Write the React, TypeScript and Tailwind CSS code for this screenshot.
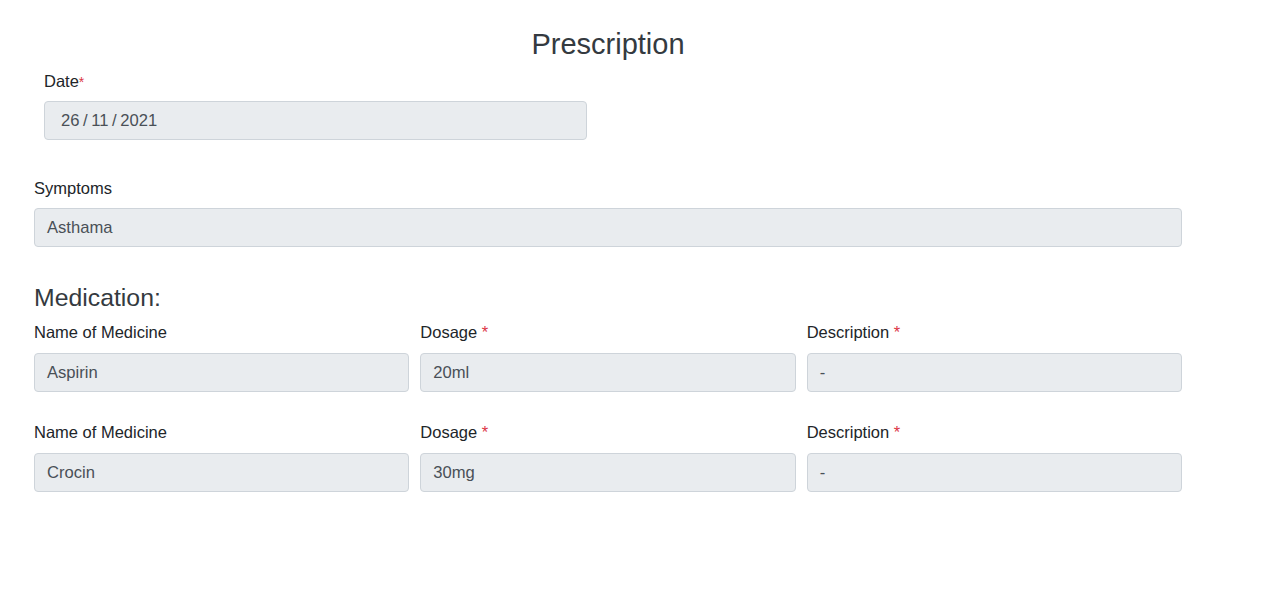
import React from "react";

const inputCls =
  "h-[39px] w-full rounded-[4px] border border-[#ced4da] bg-[#e9ecef] px-[12px] text-[16.6px] leading-[24px] text-[#495057] flex items-center";

function Field({
  label,
  value,
  required,
  mb,
}: {
  label: string;
  value: string;
  required?: boolean;
  mb: string;
}) {
  return (
    <div className="flex flex-col">
      <label className={"text-[16.5px] leading-[22px] text-[#212529] " + mb}>
        {label}
        {required && <span className="text-[#dc3545]"> *</span>}
      </label>
      <div className={inputCls}>{value}</div>
    </div>
  );
}

export default function App() {
  const rows = [
    { name: "Aspirin", dosage: "20ml", desc: "-" },
    { name: "Crocin", dosage: "30mg", desc: "-" },
  ];
  return (
    <div
      className="min-h-[608px] w-[1280px] bg-white"
      style={{ fontFamily: '"Liberation Sans", Arial, sans-serif' }}
    >
      <div className="ml-[34px] w-[1148px] pt-[26px]">
        <h3 className="pt-[1px] text-center text-[29px] leading-[34px] text-[#343a40]">Prescription</h3>
        <div className="ml-[10px] mt-[8px] w-[543px] flex flex-col">
          <label className="text-[16.5px] leading-[24px] text-[#212529] mb-[7px]">
            Date<span className="text-[#dc3545] text-[14px]">*</span>
          </label>
          <div className={inputCls + " pl-[16px] [word-spacing:-1px]"}>26 / 11 / 2021</div>
        </div>
        <div className="mt-[37px]">
          <Field label="Symptoms" value="Asthama" mb="mb-[9px]" />
        </div>
        <h4 className="mt-[36px] mb-[9px] text-[24.8px] leading-[29px] text-[#343a40]">Medication:</h4>
        <div className="flex flex-col gap-[29px]">
          {rows.map((r, i) => (
            <div key={i} className="grid grid-cols-3 gap-x-[11px]">
              <Field label="Name of Medicine" value={r.name} mb="mb-[10px]" />
              <Field label="Dosage" value={r.dosage} required mb="mb-[10px]" />
              <Field label="Description" value={r.desc} required mb="mb-[10px]" />
            </div>
          ))}
        </div>
      </div>
    </div>
  );
}
